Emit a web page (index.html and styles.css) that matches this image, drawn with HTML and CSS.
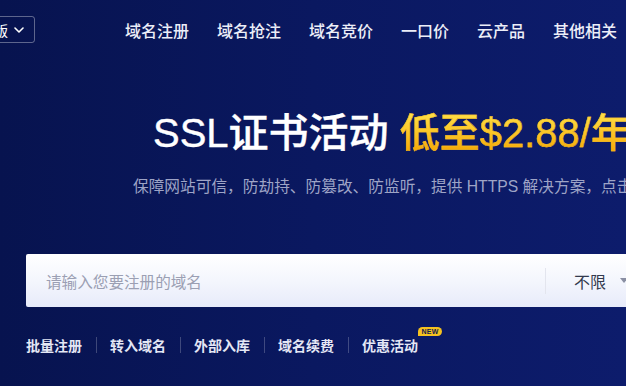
FILE: index.html
```html
<!DOCTYPE html>
<html lang="zh-CN">
<head>
<meta charset="utf-8">
<title>域名注册</title>
<link rel="stylesheet" href="styles.css">
</head>
<body>
<div class="page">
  <header class="header">
    <div class="lang">
      <span>中文版</span>
      <svg class="chev" width="10" height="6" viewBox="0 0 10 6"><path d="M1 1l4 4 4-4" fill="none" stroke="#fff" stroke-width="1.6" stroke-linecap="round" stroke-linejoin="round"/></svg>
    </div>
    <nav class="nav">
      <a>域名注册</a>
      <a>域名抢注</a>
      <a>域名竞价</a>
      <a>一口价</a>
      <a>云产品</a>
      <a>其他相关</a>
    </nav>
  </header>

  <h1 class="title">SSL证书活动 <span class="gold">低至$2.88/年</span></h1>
  <p class="subtitle">保障网站可信，防劫持、防篡改、防监听，提供 HTTPS 解决方案，点击了解详情</p>

  <div class="search">
    <div class="search-input">请输入您要注册的域名</div>
    <div class="search-sep"></div>
    <div class="search-select">
      <span>不限</span>
      <span class="caret"></span>
    </div>
  </div>

  <div class="links">
    <a>批量注册</a>
    <span class="bar"></span>
    <a>转入域名</a>
    <span class="bar"></span>
    <a>外部入库</a>
    <span class="bar"></span>
    <a>域名续费</a>
    <span class="bar"></span>
    <a class="has-badge">优惠活动<span class="badge">NEW</span></a>
  </div>
</div>
</body>
</html>
```
FILE: styles.css
```css
html, body {
  margin: 0;
  padding: 0;
}
body {
  width: 626px;
  height: 386px;
  overflow: hidden;
  background: linear-gradient(90deg, #07134f 0%, #0a1860 50%, #0d1c6c 100%);
  font-family: "Liberation Sans", "Noto Sans CJK SC", sans-serif;
  color: #fff;
}
.page {
  width: 626px;
  height: 386px;
  overflow: hidden;
}
.header {
  display: flex;
  align-items: center;
  height: 59px;
  white-space: nowrap;
}
.lang {
  display: flex;
  align-items: center;
  justify-content: flex-end;
  gap: 6px;
  flex: none;
  box-sizing: border-box;
  width: 80px;
  height: 27px;
  margin-left: -45px;
  padding-right: 10px;
  border: 1px solid rgba(255,255,255,0.35);
  border-radius: 3px;
  font-size: 14px;
  color: #fff;
}
.chev { display: block; }
.nav {
  display: flex;
  gap: 28px;
  margin-left: 90px;
  font-size: 16px;
  font-weight: 500;
  color: #eceef8;
}
.nav a { flex: none; }

.title {
  margin: 54px 0 0;
  padding-left: 153px;
  font-size: 40px;
  line-height: 40px;
  font-weight: 500;
  white-space: nowrap;
  color: #fff;
  -webkit-text-stroke: 0.4px #fff;
}
.gold {
  background: linear-gradient(180deg, #ffe24a 0%, #fcc526 50%, #f4a300 100%);
  -webkit-background-clip: text;
  background-clip: text;
  color: transparent;
  -webkit-text-stroke: 0.4px #fbc024;
}
.subtitle {
  margin: 24px 0 0;
  padding-left: 133px;
  font-size: 15.7px;
  line-height: 20px;
  color: #9ea4c6;
  white-space: nowrap;
}
.search {
  display: flex;
  align-items: center;
  margin: 57px 0 0 26px;
  width: 720px;
  height: 53px;
  background: linear-gradient(180deg, #ffffff 0%, #f4f6fd 50%, #e7ebfa 100%);
  border-radius: 2px;
}
.search-input {
  flex: none;
  box-sizing: border-box;
  width: 519px;
  padding-left: 20px;
  font-size: 15.6px;
  color: #9b9fb3;
}
.search-sep {
  flex: none;
  width: 1px;
  height: 26px;
  background: #e3e5ee;
}
.search-select {
  display: flex;
  align-items: center;
  padding-left: 28px;
  font-size: 16px;
  color: #333a4d;
}
.caret {
  margin-left: 14px;
  width: 0;
  height: 0;
  border-left: 4px solid transparent;
  border-right: 4px solid transparent;
  border-top: 5px solid #8a8fa3;
}
.links {
  display: flex;
  align-items: center;
  margin: 28px 0 0 26px;
  font-size: 14px;
  font-weight: 700;
  color: #e4e7f5;
  white-space: nowrap;
}
.links a { flex: none; }
.bar {
  flex: none;
  width: 1px;
  height: 16px;
  margin: 0 13px 0 14px;
  background: rgba(255,255,255,0.22);
}
.has-badge { position: relative; }
.badge {
  position: absolute;
  left: 56px;
  top: -8px;
  width: 24px;
  height: 9px;
  border-radius: 5px 5px 5px 0;
  background: #f6c21f;
  color: #131c4f;
  font-size: 7px;
  line-height: 9px;
  font-weight: 700;
  text-align: center;
  letter-spacing: 0.2px;
}
```
